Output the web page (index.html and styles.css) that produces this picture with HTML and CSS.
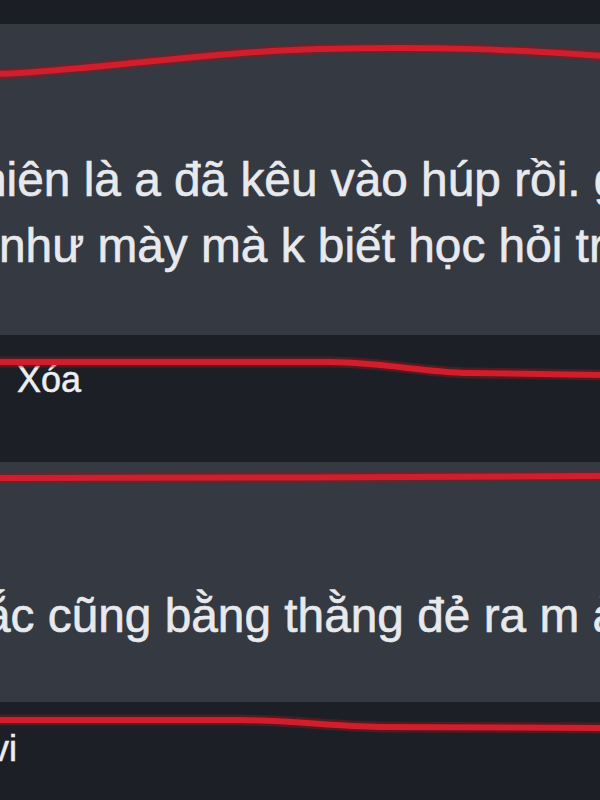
FILE: index.html
```html
<!DOCTYPE html>
<html lang="vi">
<head>
    <meta charset="utf-8">
    <meta name="viewport" content="width=device-width, initial-scale=1.0">
    <title>Bình luận</title>
    <link rel="stylesheet" href="styles.css">
</head>
<body>
    <div class="thread">
        <div class="top-strip"></div>
        <div class="bubble bubble-first">
            <p class="line line-a">hiên là a đã kêu vào húp rồi. gặp</p>
            <p class="line line-b">như mày mà k biết học hỏi trước</p>
        </div>
        <div class="actions actions-first">
            <span class="action">Xóa</span>
        </div>
        <div class="bubble bubble-second">
            <p class="line line-c">ắc cũng bằng thằng đẻ ra m ảnh</p>
        </div>
        <div class="actions actions-second">
            <span class="action action-cut">vi</span>
        </div>

        <!-- red marker strokes drawn over the screenshot -->
        <svg class="strokes" width="600" height="800" viewBox="0 0 600 800">
            <g fill="none" stroke-linecap="round">
                <path class="glow" d="M-5 74 C 80 72, 200 52, 320 49 S 520 50, 605 56"/>
                <path class="ink" d="M-5 74 C 80 72, 200 52, 320 49 S 520 50, 605 56"/>
                <path class="glow" d="M-5 362 L 330 362 C 390 363, 420 372, 470 373 L 605 375"/>
                <path class="ink" d="M-5 362 L 330 362 C 390 363, 420 372, 470 373 L 605 375"/>
                <path class="glow" d="M-5 478 C 200 477, 400 478, 605 476"/>
                <path class="ink" d="M-5 478 C 200 477, 400 478, 605 476"/>
                <path class="glow" d="M-5 720 L 240 720 C 300 721, 330 726, 380 727 L 605 728"/>
                <path class="ink" d="M-5 720 L 240 720 C 300 721, 330 726, 380 727 L 605 728"/>
            </g>
        </svg>
    </div>
</body>
</html>
```

FILE: styles.css
```css
body {
    margin: 0;
    padding: 0;
    background-color: #1c1f26;
    color: #e8e9ed;
    font-family: 'Liberation Sans', Arial, sans-serif;
}

.thread {
    position: relative;
    width: 600px;
    height: 800px;
    overflow: hidden;
}

.top-strip {
    height: 24px;
    background-color: #1b1e25;
}

.bubble {
    background-color: #343942;
    overflow: hidden;
    white-space: nowrap;
}

.bubble-first {
    height: 311px;
    padding-top: 123px;
    box-sizing: border-box;
}

.bubble-second {
    height: 240px;
    padding-top: 121px;
    box-sizing: border-box;
}

.line {
    margin: 0;
    font-size: 47.8px;
    line-height: 66px;
    -webkit-text-stroke: 0.6px #e8e9ed;
}

.line-a {
    margin-left: -20px;
}

.line-b {
    margin-left: -1px;
}

.line-c {
    margin-left: -16px;
}

.actions {
    background-color: #1c1f26;
    overflow: hidden;
    white-space: nowrap;
}

.actions-first {
    height: 127px;
    padding: 23px 0 0 17px;
    box-sizing: border-box;
}

.actions-second {
    height: 98px;
    padding: 25px 0 0 0;
    box-sizing: border-box;
}

.action {
    display: inline-block;
    font-size: 36px;
    line-height: 44px;
    color: #eceef1;
    -webkit-text-stroke: 0.5px #eceef1;
}

.action-cut {
    margin-left: -9px;
}

.strokes {
    position: absolute;
    left: 0;
    top: 0;
    pointer-events: none;
}

.strokes .glow {
    stroke: rgba(150, 20, 30, 0.45);
    stroke-width: 11;
}

.strokes .ink {
    stroke: #d01e2c;
    stroke-width: 6;
}
```
